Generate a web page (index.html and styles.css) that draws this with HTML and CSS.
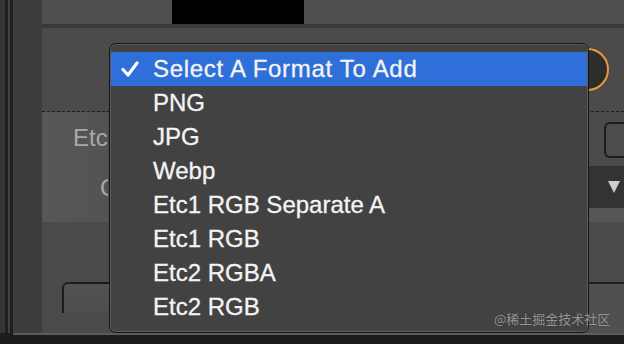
FILE: index.html
```html
<!DOCTYPE html>
<html lang="en">
<head>
    <meta charset="UTF-8">
    <title>Format Select</title>
    <link rel="stylesheet" href="styles.css">
</head>
<body>

<div class="app">
    <!-- left edge strip -->
    <div class="sidebar"></div>

    <div class="main">
        <div class="tabbar">
            <div class="tab"><span class="tab-mark">"</span></div>
        </div>
        <div class="rule"></div>

        <!-- add format row -->
        <div class="row-top">
            <div class="knob"></div>
        </div>

        <!-- etc settings -->
        <div class="row-etc">
            <div class="label-col">
                <div class="label">Etc</div>
                <div class="label label-g">G</div>
            </div>
            <div class="mid"></div>
            <div class="ctrl-col">
                <div class="box"></div>
                <div class="select-bar"><span class="tri"></span></div>
                <div class="select-foot"></div>
            </div>
        </div>

        <!-- bottom buttons -->
        <div class="row-bottom">
            <div class="btn"></div>
            <div class="bottom-right">
                <div class="br-top"></div>
                <div class="br-bottom"></div>
            </div>
        </div>
    </div>
</div>
<div class="footer"></div>

<!-- popup menu -->
<div class="menu">
    <div class="item active">
        <svg class="check" width="18" height="18" viewBox="0 0 18 18">
            <polyline points="2,9.5 7,15 16,3" fill="none" stroke="#fff" stroke-width="3.2" stroke-linecap="round" stroke-linejoin="round"/>
        </svg>
        <span>Select A Format To Add</span>
    </div>
    <div class="item"><span>PNG</span></div>
    <div class="item"><span>JPG</span></div>
    <div class="item"><span>Webp</span></div>
    <div class="item"><span>Etc1 RGB Separate A</span></div>
    <div class="item"><span>Etc1 RGB</span></div>
    <div class="item"><span>Etc2 RGBA</span></div>
    <div class="item"><span>Etc2 RGB</span></div>
</div>

<div class="watermark">@稀土掘金技术社区</div>

</body>
</html>
```

FILE: styles.css
```css
body {
    margin: 0;
    width: 624px;
    height: 344px;
    overflow: hidden;
    background-color: #1d1d1d;
    font-family: "Liberation Sans", Arial, sans-serif;
    position: relative;
}

.app {
    display: flex;
    height: 333px;
}

.sidebar {
    width: 42px;
    background: linear-gradient(to right,
        #363636 0, #363636 5px,
        #1f1f1f 5px, #1f1f1f 8px,
        #404040 8px, #404040 10px,
        #1f1f1f 10px, #1f1f1f 13px,
        #3d3d3d 13px, #3d3d3d 42px);
}

.main {
    flex: 1;
    display: flex;
    flex-direction: column;
    overflow: hidden;
    background-color: #4b4b4b;
}

.tabbar {
    height: 24px;
    background-color: #4f4f4f;
    padding-left: 130px;
}

.tab {
    width: 132px;
    height: 24px;
    background-color: #000;
    position: relative;
    overflow: hidden;
}

.tab-mark {
    position: absolute;
    left: 61px;
    top: -12px;
    color: #ddd;
    font-size: 16px;
}

.rule {
    height: 4px;
    background-color: #3a3a3a;
}

.row-top {
    height: 83px;
    display: flex;
    justify-content: flex-end;
    align-items: center;
    border-bottom: 1px dashed #1e1e1e;
}

.knob {
    width: 39px;
    height: 39px;
    border-radius: 50%;
    background-color: #2d2d2d;
    border: 2px solid #e59a3e;
    margin-right: 15px;
    flex-shrink: 0;
}

.row-etc {
    height: 110px;
    display: grid;
    grid-template-columns: 66px 1fr 35px;
}

.label-col {
    background: linear-gradient(to right, #575757, #535353);
    padding-top: 12px;
    overflow: hidden;
}

.label {
    font-size: 24px;
    color: #a9a9a9;
    white-space: nowrap;
    margin-left: 31px;
    height: 50px;
}

.label-g {
    margin-left: 58px;
}

.ctrl-col {
    padding-top: 10px;
    display: flex;
    flex-direction: column;
}

.box {
    height: 32px;
    margin-left: 15px;
    border: 2px solid #1e1e1e;
    border-right: none;
    border-radius: 6px 0 0 6px;
    background-color: #4d4d4d;
}

.select-bar {
    margin-top: 8px;
    height: 42px;
    background-color: #333;
    display: flex;
    align-items: center;
    padding-left: 19px;
}

.tri {
    width: 0;
    height: 0;
    border-left: 6px solid transparent;
    border-right: 6px solid transparent;
    border-top: 12px solid #cfcfcf;
}

.select-foot {
    flex: 1;
    background-color: #565656;
}

.row-bottom {
    flex: 1;
    display: flex;
    justify-content: space-between;
    background-color: #4a4a4a;
}

.btn {
    width: 60px;
    height: 29px;
    margin-top: 60px;
    margin-left: 20px;
    border-top: 2px solid #1c1c1c;
    border-left: 2px solid #1c1c1c;
    border-radius: 6px 0 0 0;
    background: linear-gradient(to bottom, #525252, #4e4e4e);
}

.bottom-right {
    width: 35px;
    display: flex;
    flex-direction: column;
}

.br-top {
    height: 60px;
    border-bottom: 2px solid #1f1f1f;
}

.br-bottom {
    flex: 1;
    background-color: #505050;
}

.footer {
    height: 2px;
    background-color: #5b5b5b;
    margin-left: 13px;
}

/* popup menu over the panel */
.menu {
    position: absolute;
    left: 109px;
    top: 43px;
    width: 478px;
    padding: 8px 0 8px;
    background-color: #424242;
    border: 1px solid #161616;
    border-radius: 7px;
    box-shadow: inset 0 0 0 1px #5c5c5c;
}

.item {
    height: 34px;
    display: flex;
    align-items: center;
    padding-left: 43px;
    color: #f4f4f4;
    font-size: 24px;
    white-space: nowrap;
    position: relative;
    -webkit-text-stroke: 0.3px #f4f4f4;
}

.item.active {
    background-color: #2e6fd9;
    margin: 0 1px;
    padding-left: 42px;
    letter-spacing: 0.7px;
}

.check {
    position: absolute;
    left: 10px;
    top: 8px;
}

.watermark {
    position: absolute;
    left: 494px;
    top: 309px;
    font-family: "Noto Sans CJK SC", sans-serif;
    font-size: 13px;
    color: rgba(225, 225, 225, 0.6);
    text-shadow: 0 0 1px #222;
}
```
